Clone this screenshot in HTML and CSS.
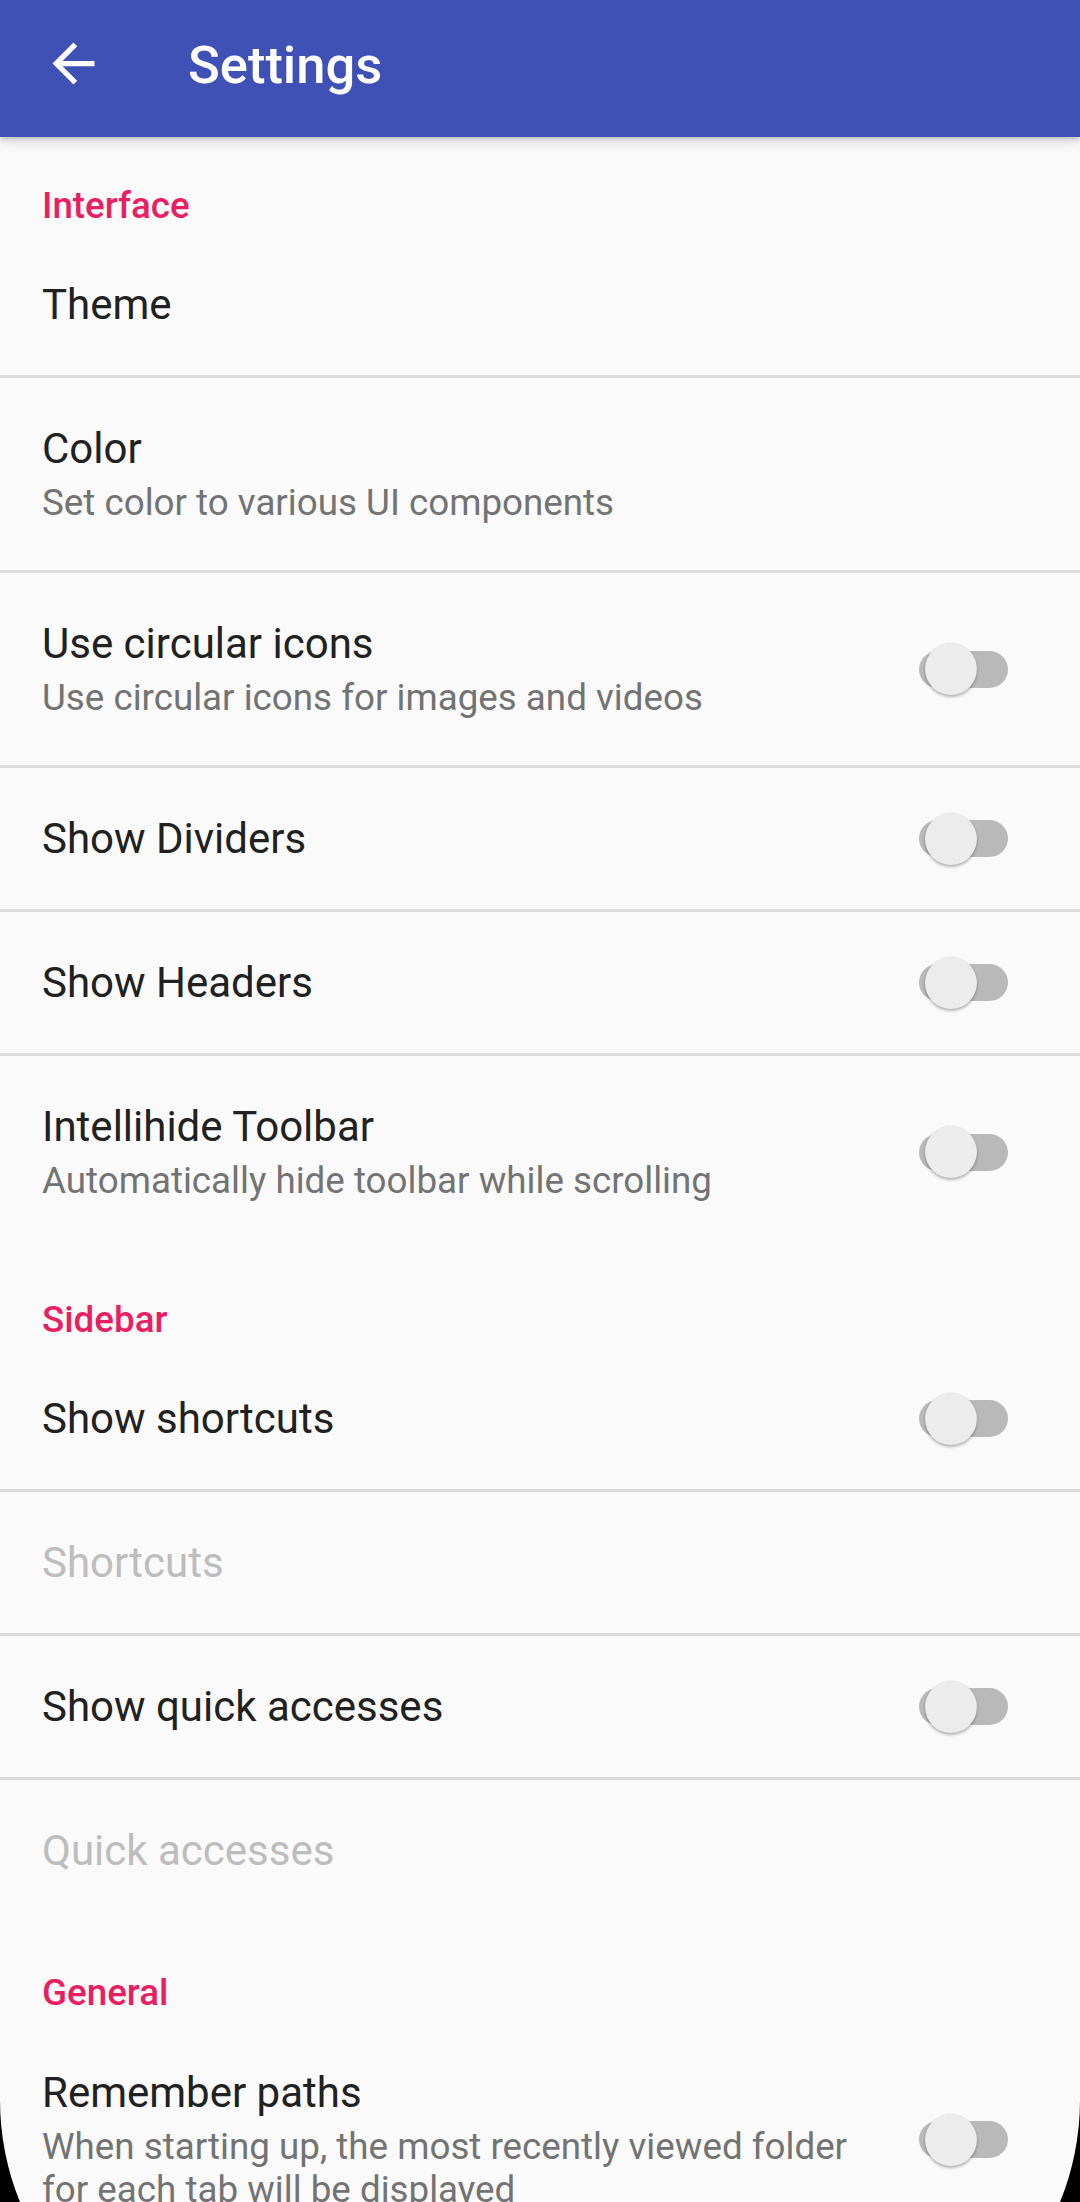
FILE: index.html
```html
<!DOCTYPE html>
<html lang="en">
<head>
<meta charset="utf-8">
<title>Settings</title>
<link rel="stylesheet" href="styles.css">
</head>
<body>
<div class="screen">
  <header class="appbar">
    <svg class="back" viewBox="0 0 24 24" width="63" height="63" aria-hidden="true">
      <path fill="#ffffff" d="M20 11H7.83l5.59-5.59L12 4l-8 8 8 8 1.41-1.41L7.83 13H20v-2z"/>
    </svg>
    <h1 class="appbar-title">Settings</h1>
  </header>

  <main class="list">
    <section class="category">
      <div class="cat-title">Interface</div>
      <div class="pref single"><div class="text"><div class="title">Theme</div></div></div>
      <div class="pref double"><div class="text"><div class="title">Color</div><div class="summary">Set color to various UI components</div></div></div>
      <div class="pref double"><div class="text"><div class="title">Use circular icons</div><div class="summary">Use circular icons for images and videos</div></div><div class="switch"><span class="thumb"></span></div></div>
      <div class="pref single"><div class="text"><div class="title">Show Dividers</div></div><div class="switch"><span class="thumb"></span></div></div>
      <div class="pref single"><div class="text"><div class="title">Show Headers</div></div><div class="switch"><span class="thumb"></span></div></div>
      <div class="pref double"><div class="text"><div class="title">Intellihide Toolbar</div><div class="summary">Automatically hide toolbar while scrolling</div></div><div class="switch"><span class="thumb"></span></div></div>
    </section>

    <section class="category">
      <div class="cat-title">Sidebar</div>
      <div class="pref single"><div class="text"><div class="title">Show shortcuts</div></div><div class="switch"><span class="thumb"></span></div></div>
      <div class="pref single"><div class="text"><div class="title disabled">Shortcuts</div></div></div>
      <div class="pref single"><div class="text"><div class="title">Show quick accesses</div></div><div class="switch"><span class="thumb"></span></div></div>
      <div class="pref single"><div class="text"><div class="title disabled">Quick accesses</div></div></div>
    </section>

    <section class="category">
      <div class="cat-title">General</div>
      <div class="pref multi"><div class="text"><div class="title">Remember paths</div><div class="summary">When starting up, the most recently viewed folder for each tab will be displayed</div></div><div class="switch"><span class="thumb"></span></div></div>
    </section>
  </main>

  <div class="corners"></div>
</div>
</body>
</html>
```

FILE: styles.css
```css
html, body {
  margin: 0;
  padding: 0;
  overflow: hidden;
  background: #000;
}

.screen {
  width: 1080px;
  height: 2202px;
  overflow: hidden;
  background: #fafafa;
  font-family: Roboto, "Noto Sans", "Liberation Sans", sans-serif;
  position: relative;
}

.appbar {
  position: relative;
  z-index: 2;
  display: flex;
  align-items: flex-start;
  height: 137px;
  box-sizing: border-box;
  padding-left: 42px;
  background: #3f51b5;
  box-shadow: 0 4px 12px rgba(0, 0, 0, 0.16), 0 2px 4px rgba(0, 0, 0, 0.12);
}

.back {
  display: block;
  margin-top: 32px;
  flex: none;
}

.appbar-title {
  margin: 34px 0 0 83px;
  font-size: 52.5px;
  line-height: 62px;
  font-weight: 500;
  color: #ffffff;
}

.list {
  position: relative;
  z-index: 1;
}

.cat-title {
  box-sizing: border-box;
  height: 97px;
  padding: 47px 42px 7px;
  font-size: 36.75px;
  line-height: 43px;
  font-weight: 500;
  color: #e91e63;
}

.pref {
  display: flex;
  align-items: center;
  padding: 0 72px 0 42px;
  border-bottom: 3px solid #dcdcdc;
}

.category .pref:last-child {
  border-bottom-color: transparent;
}

.pref.single {
  height: 141px;
}

.pref.double {
  height: 192px;
}

.pref.multi {
  padding-top: 47px;
  padding-bottom: 38px;
}

.text {
  flex: 1;
  min-width: 0;
}

.title {
  font-size: 42px;
  line-height: 49px;
  color: #212121;
}

.title.disabled {
  color: #bdbdbd;
}

.summary {
  margin-top: 8px;
  font-size: 36.75px;
  line-height: 43px;
  color: #737373;
}

.switch {
  position: relative;
  flex: none;
  width: 89px;
  height: 37px;
  margin-left: 56px;
  border-radius: 18.5px;
  background: #b9b9b9;
}

.thumb {
  position: absolute;
  left: 6px;
  top: -7.5px;
  width: 52px;
  height: 52px;
  border-radius: 50%;
  background: #ececec;
  box-shadow: 0 2px 3px rgba(0, 0, 0, 0.28), 0 0 1px rgba(0, 0, 0, 0.12);
}

.corners {
  position: absolute;
  left: 0;
  top: 0;
  width: 1080px;
  height: 2370px;
  border-radius: 0 0 270px 270px;
  box-shadow: 0 0 0 400px #000;
  pointer-events: none;
  z-index: 5;
}
```
